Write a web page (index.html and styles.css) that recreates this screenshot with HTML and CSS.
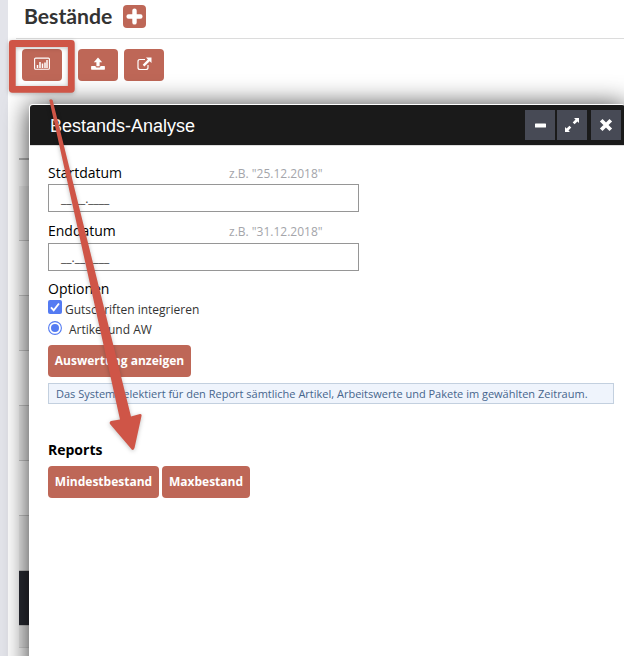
FILE: index.html
```html
<!DOCTYPE html>
<html lang="de">
<head>
<meta charset="utf-8">
<title>Bestände</title>
<link rel="stylesheet" href="styles.css">
</head>
<body>
<main class="page">
  <header class="page-head">
    <h1>Bestände</h1>
    <button class="add" aria-label="Neu"><svg width="23" height="23" viewBox="0 0 23 23"><path d="M11.500 5.600v11.800M5.600 11.500h11.800" stroke="#fff" stroke-width="4.400" stroke-linecap="round"/></svg></button>
  </header>
  <nav class="toolbar">
    <button class="tool tool-chart" aria-label="Analyse"><svg width="16" height="14" viewBox="0 0 16 14"><rect x=".6" y="1.1" width="14.800" height="11.200" rx="1" fill="none" stroke="#fff" stroke-width="1.1"/><path d="M3.500 8v3M6 5v6M8.500 6.500V11M11 5.500V11M13 3v8" stroke="#fff" stroke-width="1.500"/></svg></button>
    <button class="tool" aria-label="Hochladen"><svg width="14" height="14" viewBox="0 0 14 14" fill="#fff"><path d="M7 .5l4.200 4.700H8.600v4H5.400v-4H2.800z"/><path d="M.7 9h3.900v.5q.2.9 1 .9h2.800q.8 0 1-.9V9h3.900q.6 0 .6.6v2.500q0 .6-.6.6H.7q-.6 0-.6-.6V9.600Q.1 9 .7 9z"/></svg></button>
    <button class="tool" aria-label="Extern"><svg width="15" height="14" viewBox="0 0 15 14"><path d="M8 2.500H3Q1 2.500 1 4.500v6q0 2 2 2h6q2 0 2-2V8" fill="none" stroke="#fff" stroke-width="1.200"/><path d="M9 .5h5.500V6l-1.800-1.800-5.300 5.200-1.700-1.700 5.200-5.300z" fill="#fff"/></svg></button>
  </nav>
  <div class="table">
    <div class="row head"></div>
    <div class="row filter"></div>
    <div class="row odd"></div>
    <div class="row"></div>
    <div class="row odd"></div>
    <div class="row"></div>
    <div class="row odd"></div>
    <div class="row"></div>
    <div class="row odd"></div>
    <div class="row dark"></div>
    <div class="row foot"></div>
  </div>
</main>

<section class="dialog">
  <header class="titlebar">
    <h2>Bestands-Analyse</h2>
    <div class="controls">
      <button aria-label="Minimieren"><svg width="30" height="30"><rect x="10" y="13.500" width="11" height="4" rx=".6" fill="#fff"/></svg></button>
      <button aria-label="Maximieren"><svg width="30" height="30" fill="#fff"><path d="M17 8h5v5l-1.600-1.500-2.800 2.800-1.900-1.900 2.800-2.800zM8 17v5h5l-1.500-1.600 2.800-2.800-1.900-1.900-2.800 2.800z"/></svg></button>
      <button class="close" aria-label="Schließen"><svg width="30" height="30"><path d="M11.500 11.500l7 7M18.500 11.500l-7 7" stroke="#fff" stroke-width="3.700" stroke-linecap="square"/></svg></button>
    </div>
  </header>
  <form class="form">
    <div class="label"><span class="name">Startdatum</span><span class="hint">z.B. "25.12.2018"</span></div>
    <div class="input">__.__.____</div>
    <div class="label second"><span class="name">Enddatum</span><span class="hint">z.B. "31.12.2018"</span></div>
    <div class="input">__.__.____</div>
    <div class="options">Optionen</div>
    <label class="choice"><svg width="14" height="14"><rect width="14" height="14" rx="2" fill="#547bf2"/><path d="M3 7.300l2.700 3L11 3.500" fill="none" stroke="#fff" stroke-width="1.900"/></svg><span class="t-check">Gutschriften integrieren</span></label>
    <label class="choice radio"><svg width="14" height="14"><circle cx="7" cy="7" r="6.400" fill="#fff" stroke="#547bf2" stroke-width="1.100"/><circle cx="7" cy="7" r="4" fill="#547bf2"/></svg><span class="t-radio">Artikel und AW</span></label>
    <button type="button" class="btn show">Auswertung anzeigen</button>
    <div class="info"><span>Das System selektiert für den Report sämtliche Artikel, Arbeitswerte und Pakete im gewählten Zeitraum.</span></div>
    <h3>Reports</h3>
    <div class="reports">
      <button type="button" class="btn min">Mindestbestand</button>
      <button type="button" class="btn max">Maxbestand</button>
    </div>
  </form>
</section>

<svg class="marker" width="624" height="656" viewBox="0 0 624 656">
  <rect x="12.300" y="43.500" width="59" height="45.800" fill="none" stroke="#cf5547" stroke-width="6.800" stroke-linejoin="round"/>
  <path d="M49.300 100q1.700-1.500 3.300 0L131 416.500l9-2.500q2 0 1.500 2L134.500 448q-1.500 4-4 0L110 424q-1-2 1-3l9-1.500z" fill="#cf5547"/>
</svg>
</body>
</html>
```
FILE: styles.css
```css
* { box-sizing: border-box; }
body {
  margin: 0;
  width: 624px;
  height: 656px;
  overflow: hidden;
  position: relative;
  background: #e3e4ea;
  font-family: "Open Sans", sans-serif;
  color: #000;
}
h1, h2, h3 { margin: 0; }
button { border: 0; padding: 0; font-family: inherit; }
svg { display: block; }

.page {
  margin-left: 8px;
  height: 656px;
  background: #fff;
  overflow: hidden;
}
.page-head {
  display: flex;
  align-items: flex-start;
  height: 39px;
  margin-left: 8px;
  padding: 5px 0 0 8px;
  border-bottom: 1px solid #dcdcdc;
}
.page-head h1 {
  width: 99px;
  font: bold 21.2px/22px Lato, sans-serif;
  color: #333;
}
.add {
  width: 23px;
  height: 23px;
  border-radius: 4px;
  background: #be6757;
}
.toolbar {
  display: flex;
  gap: 6px;
  padding: 10px 0 0 14px;
}
.tool {
  display: flex;
  justify-content: center;
  width: 40px;
  height: 32px;
  padding-top: 8px;
  border-radius: 4px;
  background: #be6757;
}
.tool-chart { margin-right: 10px; }

.table { margin: 77px 0 0 11px; }
.row { height: 55px; border-bottom: 1px solid #ccc; }
.odd { background: #f3f3f3; }
.row.head { height: 2px; border: 0; background: #bbb; }
.row.filter { height: 26px; border: 0; }
.row.dark { background: #292b33; }
.row.foot { height: 22px; background: #eee; border-color: #ddd; }

.dialog {
  position: absolute;
  left: 29px;
  top: 104px;
  width: 596px;
  height: 580px;
  border-radius: 4px 4px 0 0;
  border-top: 1px solid #fff;
  border-left: 1px solid #fff;
  background: #fff;
  box-shadow: 0 2px 26px 1px rgba(0, 0, 0, .75);
}
.titlebar {
  display: flex;
  justify-content: space-between;
  height: 41px;
  padding: 5px 4px 0 20px;
  border-radius: 3px 3px 0 0;
  background: #1a1a1a;
  border-bottom: 1px solid #ddd;
}
.titlebar h2 {
  font: 18px/32px "Liberation Sans", Arial, sans-serif;
  color: #fff;
}
.controls { display: flex; gap: 2px; }
.controls button { width: 30px; height: 30px; background: #474a55; }
.controls .close { margin-left: 2px; }

.form { padding: 17px 0 0 18px; }
.label { display: flex; height: 21px; line-height: 20px; }
.label.second { margin-top: 9px; height: 22px; }
.name { width: 181px; font-size: 14px; }
.hint { font-size: 12px; color: #a4a5aa; line-height: 21px; }
.input {
  width: 311px;
  height: 28px;
  padding: 5px 12px;
  border: 1px solid #969696;
  font-size: 12px;
  line-height: 17px;
  color: #444;
}
.options { margin-top: 8px; height: 21px; font-size: 14px; line-height: 20px; }
.choice {
  display: flex;
  height: 21px;
  font-size: 12px;
  line-height: 19px;
  color: #333;
}
.t-check { margin-left: 3px; }
.t-radio { margin-left: 7px; line-height: 17px; }
.btn {
  display: block;
  height: 32px;
  border-radius: 4px;
  background: #be6757;
  color: #fff;
  font-size: 12px;
  font-weight: 700;
  line-height: 32px;
  white-space: nowrap;
}
.show { margin-top: 3px; width: 143px; }
.info {
  width: 566px;
  height: 21px;
  margin-top: 6px;
  padding-left: 7px;
  border: 1px solid #c3d0df;
  background: #eff4fc;
  color: #46658c;
  font-size: 11px;
  line-height: 20px;
  white-space: nowrap;
}
h3 { margin-top: 36px; height: 26px; font-size: 14px; line-height: 20px; }
.reports { display: flex; gap: 3px; }
.min { width: 111px; }
.max { width: 88px; }

.marker {
  position: absolute;
  left: 0;
  top: 0;
  filter: drop-shadow(0 1px 2px rgba(0, 0, 0, .25));
  pointer-events: none;
}
```
